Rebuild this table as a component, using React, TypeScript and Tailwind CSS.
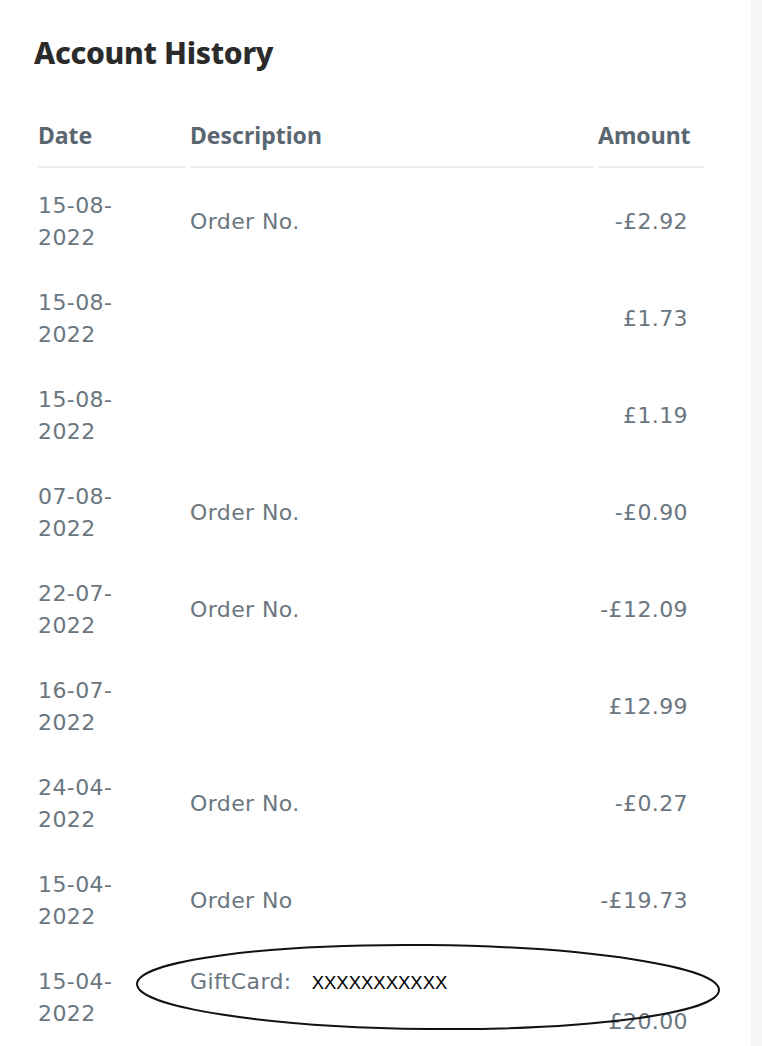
import React from "react";

type Movimiento = {
  fecha: string;
  descripcion: string;
  importe: string;
};

const movimientos: Movimiento[] = [
  { fecha: "15-08-2022", descripcion: "Order No.", importe: "-£2.92" },
  { fecha: "15-08-2022", descripcion: "", importe: "£1.73" },
  { fecha: "15-08-2022", descripcion: "", importe: "£1.19" },
  { fecha: "07-08-2022", descripcion: "Order No.", importe: "-£0.90" },
  { fecha: "22-07-2022", descripcion: "Order No.", importe: "-£12.09" },
  { fecha: "16-07-2022", descripcion: "", importe: "£12.99" },
  { fecha: "24-04-2022", descripcion: "Order No.", importe: "-£0.27" },
  { fecha: "15-04-2022", descripcion: "Order No", importe: "-£19.73" },
];

// la fecha se muestra partida en dos líneas, como en la app
function Fecha({ valor }: { valor: string }) {
  return (
    <>
      <span className="block">{valor.slice(0, 6)}</span>
      <span className="block">{valor.slice(6)}</span>
    </>
  );
}

const celda = "pt-[18px] pb-[11px] leading-[32px] align-middle";

export default function App() {
  return (
    <div className="relative flex h-[1046px] overflow-hidden bg-white">
      <main className="flex-1 pl-[34px] pt-[35px]">
        <h1 className="font-['Noto_Sans',sans-serif] text-[30px] font-extrabold leading-[36px] tracking-[-0.3px] text-[#2b2b2b]">
          Account History
        </h1>

        <table className="mt-[28px] w-[674px] table-fixed border-separate border-spacing-1">
          <colgroup>
            <col className="w-[148px]" />
            <col className="w-[404px]" />
            <col className="w-[106px]" />
          </colgroup>
          <thead>
            <tr className="font-['Noto_Sans',sans-serif] text-[23px] font-semibold text-[#5a6670]">
              <th className="border-b-2 border-[#eef0f3] pt-4 pb-[15px] text-left leading-[32px]">Date</th>
              <th className="border-b-2 border-[#eef0f3] pt-4 pb-[15px] text-left leading-[32px]">Description</th>
              <th className="border-b-2 border-[#eef0f3] pt-4 pb-[15px] pr-[19px] text-right leading-[32px]">Amount</th>
            </tr>
          </thead>
          <tbody className="font-['DejaVu_Sans',sans-serif] text-[22px] tracking-[0.4px] text-[#6a7680]">
            {movimientos.map((m, i) => (
              <tr key={i}>
                <td className={celda}>
                  <Fecha valor={m.fecha} />
                </td>
                <td className={celda}>{m.descripcion}</td>
                <td className={`${celda} pr-4 text-right`}>{m.importe}</td>
              </tr>
            ))}
            <tr>
              <td className="pt-[18px] pb-[11px] align-top leading-[32px]">
                <Fecha valor="15-04-2022" />
              </td>
              <td className="pt-[18px] pb-[11px] align-top leading-[32px]">
                GiftCard:
                <span className="ml-[20px] font-['Liberation_Sans',Arial,sans-serif] text-[18.5px] tracking-normal text-black">
                  XXXXXXXXXXX
                </span>
              </td>
              <td className="pt-[58px] pb-[11px] pr-4 text-right align-top leading-[32px]">£20.00</td>
            </tr>
          </tbody>
        </table>
      </main>
      <aside className="w-[11px] shrink-0 bg-[#f5f6f8]" />

      {/* marca a mano sobre la fila de la gift card */}
      <svg
        className="pointer-events-none absolute left-0 top-0"
        width={762}
        height={1046}
        viewBox="0 0 762 1046"
      >
        <ellipse
          cx={428}
          cy={987}
          rx={291}
          ry={42}
          transform="rotate(0.6 428 987)"
          fill="none"
          stroke="#111"
          strokeWidth={2}
        />
      </svg>
    </div>
  );
}
